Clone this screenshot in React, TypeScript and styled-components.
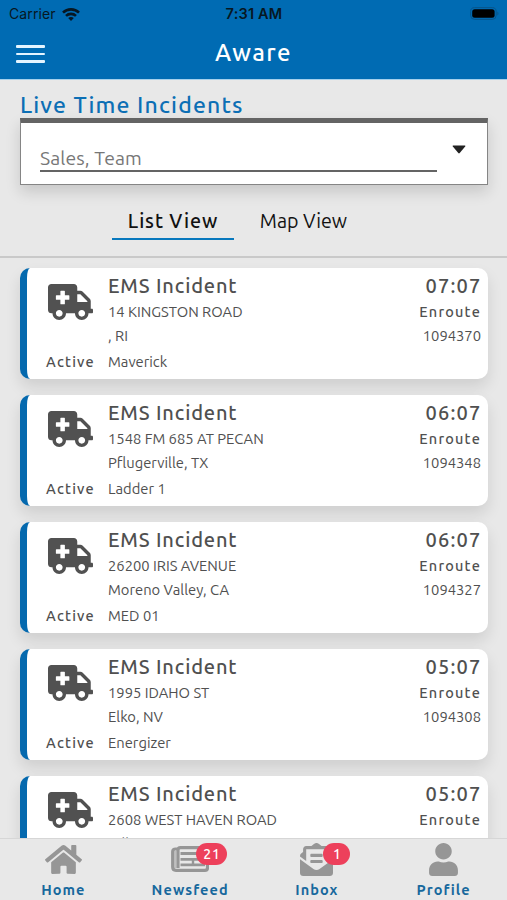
import React from "react";
import styled, { createGlobalStyle } from "styled-components";
import { FaAmbulance, FaHome, FaEnvelopeOpenText, FaUser } from "react-icons/fa";

const GlobalStyle = createGlobalStyle`
  * { box-sizing: border-box; }
  body { margin: 0; background: #e8e8e8; font-family: Ubuntu, "Noto Sans", sans-serif; }
`;

const Screen = styled.div`
  width: 507px;
  height: 900px;
  display: flex;
  flex-direction: column;
  overflow: hidden;
  background: #e8e8e8;
`;

const Header = styled.header`
  flex: none;
  height: 80px;
  background: #006bb3;
  border-bottom: 1px solid #a5d0ec;
`;

const StatusBar = styled.div`
  height: 28px;
  padding: 0 8px 0 9px;
  display: grid;
  grid-template-columns: 1fr auto 1fr;
  align-items: center;
  font: 400 14px/28px Inter, sans-serif;
  color: #071722;
`;

const Carrier = styled.div`
  display: flex;
  align-items: center;
  gap: 6px;
  letter-spacing: 0.1px;
`;

const Clock = styled.div`
  font-size: 14.5px;
  font-weight: 600;
  letter-spacing: 0.2px;
`;

const BatterySlot = styled.div`
  display: flex;
  justify-content: flex-end;
  padding-bottom: 1px;
`;

const TitleBar = styled.div`
  height: 50px;
  padding: 0 16px;
  display: grid;
  grid-template-columns: 30px 1fr 30px;
  align-items: center;
`;

const MenuButton = styled.button`
  width: 30px;
  height: 18px;
  padding: 0;
  border: 0;
  background: none;
  display: flex;
  flex-direction: column;
  justify-content: space-between;
  margin-top: 2px;
`;

const MenuLine = styled.span`
  width: 29px;
  height: 2.6px;
  border-radius: 1px;
  background: #e4f4ff;
`;

const PageTitle = styled.h1`
  margin: 0;
  text-align: center;
  color: #fff;
  font-size: 24px;
  font-weight: 500;
  line-height: 48px;
  letter-spacing: 1.4px;
`;

const Controls = styled.section`
  flex: none;
  height: 178px;
  padding: 9px 19px 0 20px;
  border-bottom: 2px solid #c9c9c9;
`;

const SectionTitle = styled.h2`
  margin: 0;
  height: 29px;
  font-size: 23px;
  font-weight: 500;
  line-height: 32px;
  letter-spacing: 1.15px;
  color: #0c6fb5;
`;

const SelectBox = styled.div`
  height: 67px;
  padding: 19px 21px 0 19px;
  display: flex;
  justify-content: space-between;
  align-items: flex-start;
  background: #fff;
  border: 1.5px solid #858585;
  border-top: 5px solid #646464;
  box-shadow: 0 7px 14px rgba(0, 0, 0, 0.14);
`;

const SelectValue = styled.div`
  width: 397px;
  height: 30px;
  border-bottom: 2px solid #646464;
  font-size: 19.4px;
  line-height: 32px;
  letter-spacing: 0.1px;
  color: #777;
`;

const Caret = styled.svg`
  width: 14px;
  height: 9px;
  margin-top: 3px;
`;

const Tabs = styled.nav`
  display: flex;
  padding-left: 92px;
  margin-top: 18px;
`;

const Tab = styled.button<{ $active?: boolean }>`
  height: 37px;
  width: ${(p) => (p.$active ? "122px" : "139px")};
  padding: 1px 0 0;
  border: 0;
  border-bottom: 2.5px solid ${(p) => (p.$active ? "#0878bd" : "transparent")};
  background: none;
  color: #111;
  font-family: inherit;
  font-size: 19.7px;
  font-weight: ${(p) => (p.$active ? 500 : 400)};
  line-height: 34px;
  letter-spacing: ${(p) => (p.$active ? "0.9px" : "0")};
`;

const List = styled.main`
  flex: 1;
  min-height: 0;
  overflow: hidden;
  padding: 10px 19px 0 20px;
  display: flex;
  flex-direction: column;
  gap: 16px;
`;

const Card = styled.article`
  flex: none;
  height: 111px;
  display: grid;
  grid-template-columns: 81px 1fr auto;
  padding: 4px 7px 0 0;
  background: #fff;
  border-left: 7px solid #0569ae;
  border-radius: 10px;
  box-shadow: 0 8px 15px rgba(0, 0, 0, 0.11);
  color: #505050;
`;

const UnitColumn = styled.div`
  display: flex;
  flex-direction: column;
  align-items: center;
  padding-left: 6px;
`;

const AmbulanceIcon = styled(FaAmbulance)`
  width: 45px;
  height: 36px;
  margin-top: 12px;
  color: #515151;
`;

const Details = styled.div<{ $end?: boolean }>`
  display: flex;
  flex-direction: column;
  align-items: ${(p) => (p.$end ? "flex-end" : "flex-start")};
`;

const Heading = styled.div<{ $time?: boolean }>`
  height: 28px;
  line-height: 27px;
  font-size: 20px;
  font-weight: 500;
  letter-spacing: ${(p) => (p.$time ? "1.2px" : "0.85px")};
  margin-right: ${(p) => (p.$time ? "-0.5px" : "0")};
`;

const Line = styled.div<{ $gapTop?: number }>`
  height: 23.5px;
  line-height: 23.5px;
  font-size: 14.75px;
  margin-top: ${(p) => p.$gapTop ?? 0}px;
  white-space: nowrap;
`;

const Status = styled(Line)`
  font-size: 14.5px;
  font-weight: 500;
  letter-spacing: 1.2px;
`;

const TabBar = styled.footer`
  flex: none;
  height: 62px;
  display: grid;
  grid-template-columns: repeat(4, 1fr);
  border-top: 1px solid #d6d6d6;
  background: #e8e8e8;
`;

const TabItem = styled.div`
  display: flex;
  flex-direction: column;
  align-items: center;
  color: #969696;
`;

const IconSlot = styled.div`
  position: relative;
  height: 40px;
  display: flex;
  align-items: center;
`;

const Badge = styled.span<{ $left: number; $wide?: boolean }>`
  position: absolute;
  left: ${(p) => p.$left}px;
  top: 4px;
  width: ${(p) => (p.$wide ? 31 : 27)}px;
  height: 22px;
  padding-left: 1px;
  border-radius: 11px;
  background: #ed405b;
  color: #fff;
  font-size: 14px;
  font-weight: 500;
  line-height: 22px;
  letter-spacing: 1px;
  text-align: center;
`;

const TabLabel = styled.div`
  height: 22px;
  line-height: 21px;
  font-size: 14.5px;
  font-weight: 600;
  letter-spacing: 1.05px;
  color: #17689d;
`;

interface Incident {
  time: string;
  street: string;
  city: string;
  id: string;
  unit?: string;
  status?: string;
}

const incidents: Incident[] = [
  { time: "07:07", street: "14 KINGSTON ROAD", city: ", RI", id: "1094370", unit: "Maverick", status: "Active" },
  { time: "06:07", street: "1548 FM 685 AT PECAN", city: "Pflugerville, TX", id: "1094348", unit: "Ladder 1", status: "Active" },
  { time: "06:07", street: "26200 IRIS AVENUE", city: "Moreno Valley, CA", id: "1094327", unit: "MED 01", status: "Active" },
  { time: "05:07", street: "1995 IDAHO ST", city: "Elko, NV", id: "1094308", unit: "Energizer", status: "Active" },
  { time: "05:07", street: "2608 WEST HAVEN ROAD", city: "Villa", id: "1094306" },
];

function NewspaperIcon() {
  return (
    <svg width="38" height="26" viewBox="0 0 38 26" fill="none" stroke="currentColor">
      <path d="M7 3H4.500Q1.700 3 1.700 5.500V21q0 3.300 3.300 3.300h29q2.500 0 2.500-2.500V4Q36.500 1.700 34 1.700H9.500Q7 1.700 7 4V22" strokeWidth="3.200" />
      <path d="M4.300 5V22" strokeWidth="2" opacity=".5" />
      <path d="M9.500 7.500H34M9.500 13.300H34M9.500 18.800H34" strokeWidth="2.800" />
      <path d="M22 13V20" strokeWidth="2.400" />
    </svg>
  );
}

function IncidentCard({ incident }: { incident: Incident }) {
  return (
    <Card>
      <UnitColumn>
        <AmbulanceIcon preserveAspectRatio="none" />
        {incident.status && <Status $gapTop={30}>{incident.status}</Status>}
      </UnitColumn>
      <Details>
        <Heading>EMS Incident</Heading>
        <Line>{incident.street}</Line>
        <Line>{incident.city}</Line>
        {incident.unit && <Line $gapTop={3}>{incident.unit}</Line>}
      </Details>
      <Details $end>
        <Heading $time>{incident.time}</Heading>
        <Status>Enroute</Status>
        <Line>{incident.id}</Line>
      </Details>
    </Card>
  );
}

export default function App() {
  return (
    <Screen>
      <GlobalStyle />
      <Header>
        <StatusBar>
          <Carrier>
            Carrier
            <svg width="18" height="13" viewBox="0 0 18 13" fill="none" stroke="#071722" strokeWidth="2.6">
              <path d="M1 4.6C5.4.3 12.6.3 17 4.6" />
              <path d="M4 7.9c2.8-2.7 7.2-2.7 10 0" />
              <path d="M6.2 10.1c1.6-1.5 4-1.5 5.600 0L9 13Z" fill="#071722" stroke="none" />
            </svg>
          </Carrier>
          <Clock>7:31 AM</Clock>
          <BatterySlot>
            <svg width="29" height="13" viewBox="0 0 29 13">
              <rect x="0.6" y="0.6" width="25.6" height="11.8" rx="4" fill="none" stroke="#07558b" />
              <rect x="2.2" y="2.2" width="22.4" height="8.6" rx="2.5" fill="#000" />
              <path d="M27.4 4.500c1.400.5 1.400 3.500 0 4Z" fill="#07558b" />
            </svg>
          </BatterySlot>
        </StatusBar>
        <TitleBar>
          <MenuButton aria-label="Menu">
            <MenuLine />
            <MenuLine />
            <MenuLine />
          </MenuButton>
          <PageTitle>Aware</PageTitle>
        </TitleBar>
      </Header>
      <Controls>
        <SectionTitle>Live Time Incidents</SectionTitle>
        <SelectBox>
          <SelectValue>Sales, Team</SelectValue>
          <Caret viewBox="0 0 14 9">
            <path d="M1.2.5h11.6q1 .2.4 1L7.7 8Q7 8.8 6.3 8L.8 1.5Q.2.7 1.2.5Z" fill="#222" />
          </Caret>
        </SelectBox>
        <Tabs>
          <Tab $active>List View</Tab>
          <Tab>Map View</Tab>
        </Tabs>
      </Controls>
      <List>
        {incidents.map((incident, i) => (
          <IncidentCard key={i} incident={incident} />
        ))}
      </List>
      <TabBar>
        <TabItem>
          <IconSlot><FaHome size={37} /></IconSlot>
          <TabLabel>Home</TabLabel>
        </TabItem>
        <TabItem>
          <IconSlot>
            <NewspaperIcon />
            <Badge $left={25} $wide>21</Badge>
          </IconSlot>
          <TabLabel>Newsfeed</TabLabel>
        </TabItem>
        <TabItem>
          <IconSlot>
            <FaEnvelopeOpenText size={33} />
            <Badge $left={23}>1</Badge>
          </IconSlot>
          <TabLabel>Inbox</TabLabel>
        </TabItem>
        <TabItem>
          <IconSlot><FaUser size={33} /></IconSlot>
          <TabLabel>Profile</TabLabel>
        </TabItem>
      </TabBar>
    </Screen>
  );
}
